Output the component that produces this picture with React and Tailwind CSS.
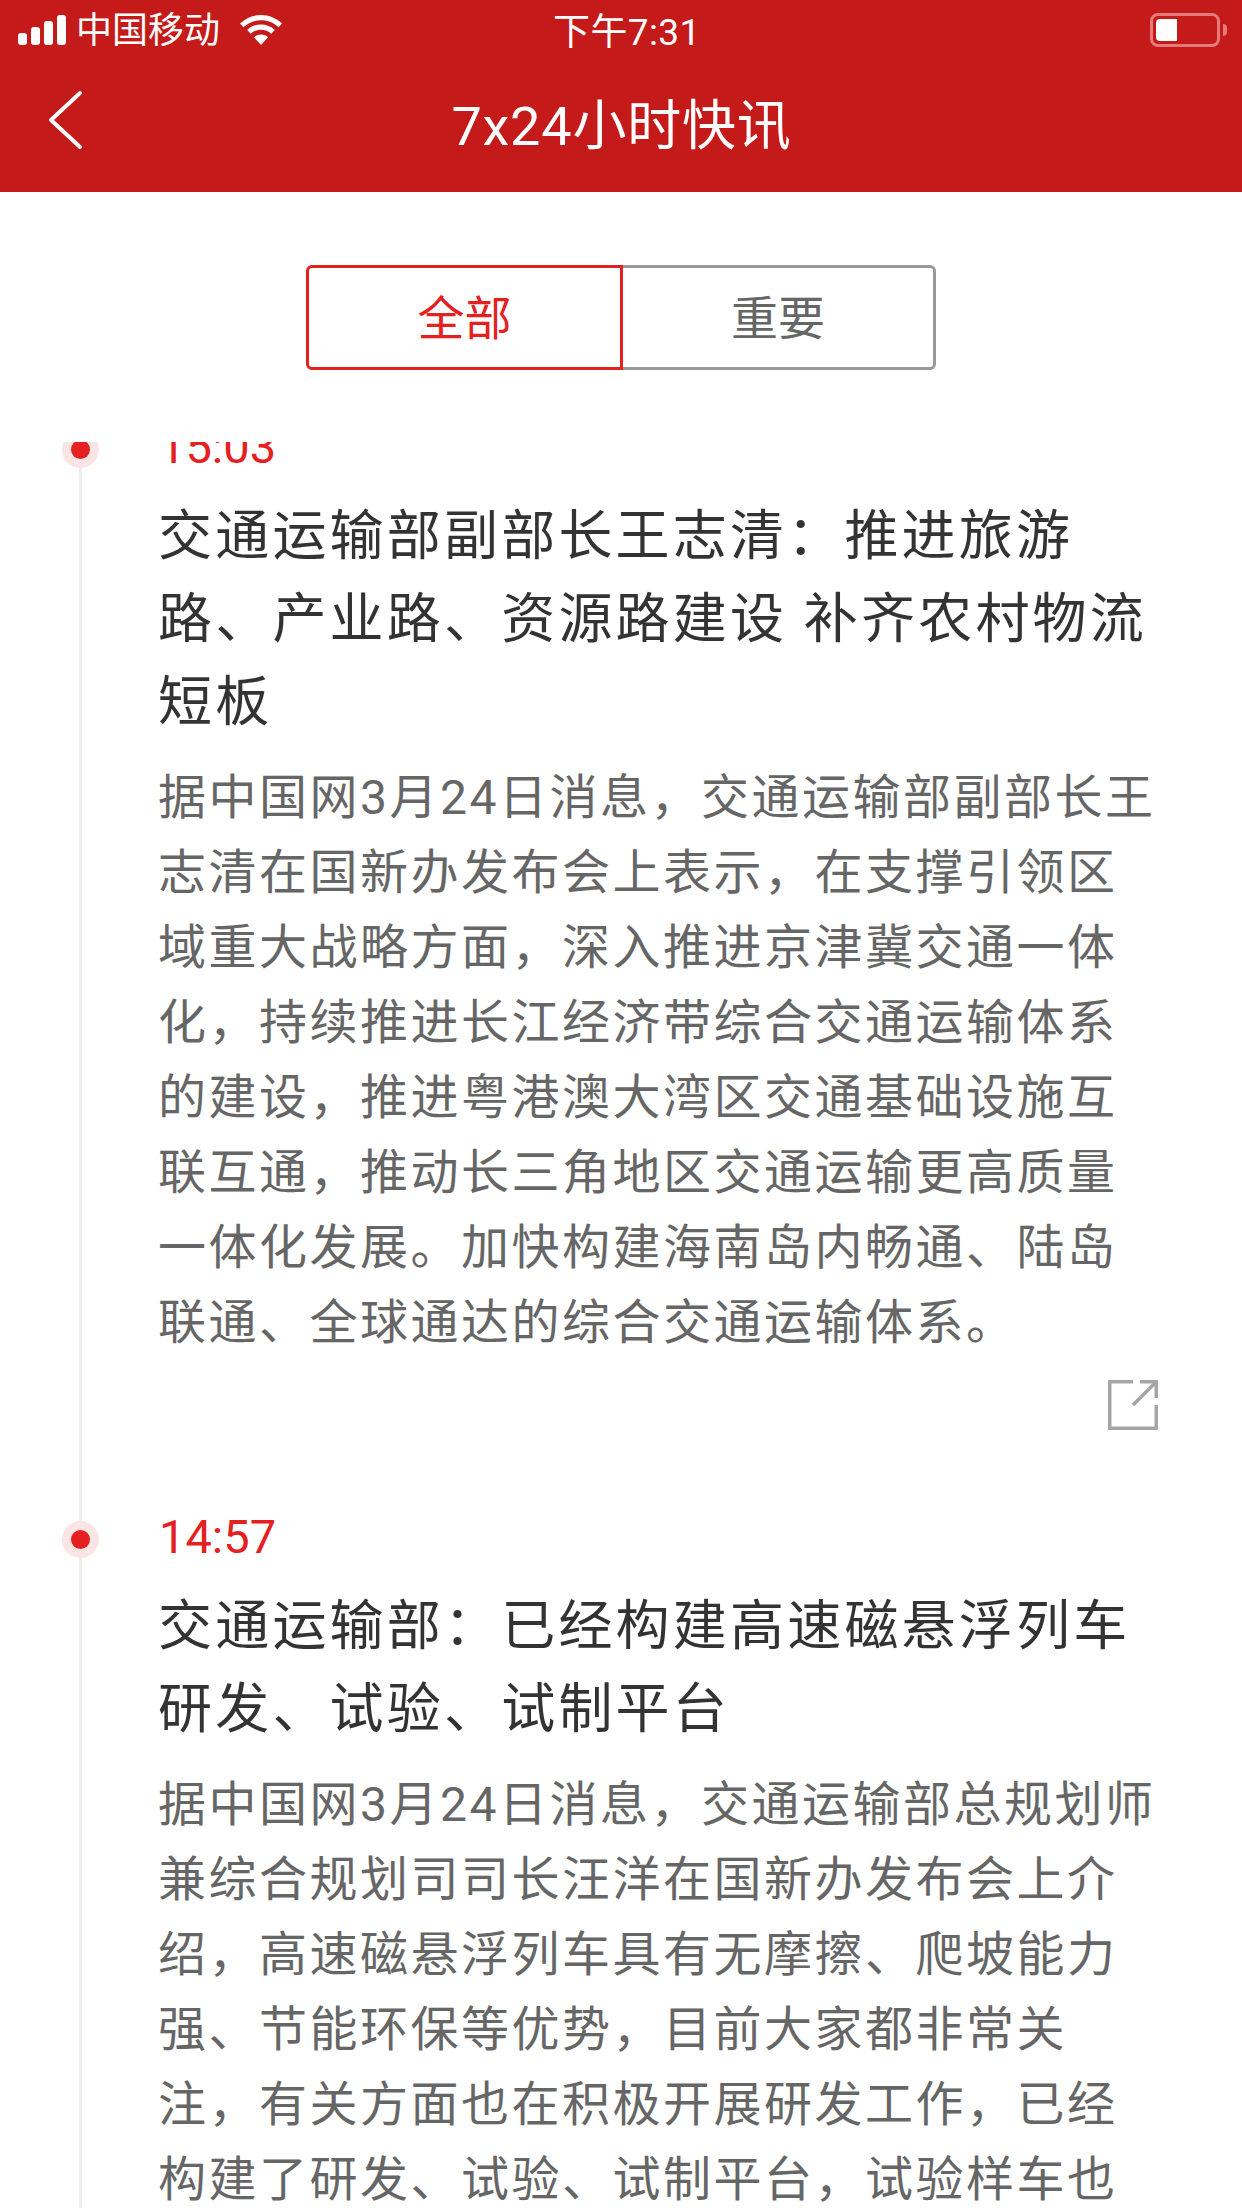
const items = [
  {
    time: "15:03",
    title: ["交通运输部副部长王志清：推进旅游", "路、产业路、资源路建设 补齐农村物流", "短板"],
    body: [
      "据中国网3月24日消息，交通运输部副部长王",
      "志清在国新办发布会上表示，在支撑引领区",
      "域重大战略方面，深入推进京津冀交通一体",
      "化，持续推进长江经济带综合交通运输体系",
      "的建设，推进粤港澳大湾区交通基础设施互",
      "联互通，推动长三角地区交通运输更高质量",
      "一体化发展。加快构建海南岛内畅通、陆岛",
      "联通、全球通达的综合交通运输体系。",
    ],
    share: true,
  },
  {
    time: "14:57",
    title: ["交通运输部：已经构建高速磁悬浮列车", "研发、试验、试制平台"],
    body: [
      "据中国网3月24日消息，交通运输部总规划师",
      "兼综合规划司司长汪洋在国新办发布会上介",
      "绍，高速磁悬浮列车具有无摩擦、爬坡能力",
      "强、节能环保等优势，目前大家都非常关",
      "注，有关方面也在积极开展研发工作，已经",
      "构建了研发、试验、试制平台，试验样车也",
    ],
  },
];

function StatusBar() {
  return (
    <div className="flex items-center h-[57px] relative text-white">
      <svg width="48" height="30" viewBox="0 0 48 30" className="ml-[18px] mt-[3px]" fill="#fff">
        <rect x="0" y="18" width="9" height="12" rx="3" />
        <rect x="13" y="12" width="9" height="18" rx="3" />
        <rect x="26" y="6" width="9" height="24" rx="3" />
        <rect x="39" y="0" width="9" height="30" rx="3" />
      </svg>
      <span className="ml-[10px] mt-[6px] text-[36px] leading-[57px]">中国移动</span>
      <svg width="42" height="30" viewBox="0 0 42 30" className="ml-[20px] mt-[3px]" fill="#fff">
        <path d="M21 0C13 0 6 3 0 8.500l3.400 3.700C8.200 7.800 14.300 5.200 21 5.200s12.800 2.600 17.600 7L42 8.500C36 3 29 0 21 0z" />
        <path d="M21 9.500c-5.300 0-10.100 2-13.800 5.400l3.500 3.800c2.800-2.500 6.400-4 10.300-4s7.500 1.500 10.300 4l3.500-3.800C31.100 11.500 26.300 9.500 21 9.500z" />
        <path d="M21 19.500c-2.700 0-5.200 1-7 2.700L21 30l7-7.800c-1.800-1.700-4.300-2.700-7-2.700z" />
      </svg>
      <span className="absolute left-[553px] top-0 text-[37px] tracking-[0.4px] leading-[66px] whitespace-nowrap">下午7:31</span>
      <div className="absolute left-[1150px] top-[13px] flex items-center">
        <div className="w-[70px] h-[34px] rounded-[8px] border-[3px] border-[#e57a7a] p-[3px]">
          <div className="w-[21px] h-[22px] bg-white rounded-l-[4px]" />
        </div>
        <div className="w-[4px] h-[12px] ml-[3px] rounded-r-[4px] bg-[#e57a7a]" />
      </div>
    </div>
  );
}

function Header() {
  return (
    <div className="relative h-[135px] flex items-center justify-center">
      <svg width="38" height="60" viewBox="0 0 38 60" className="absolute left-[47px] top-[33px]" fill="none" stroke="#fff" strokeWidth="4" strokeLinecap="round" strokeLinejoin="round">
        <path d="M33 3 L4 30 L33 57" />
      </svg>
      <span className="text-white text-[54px] leading-[72px] tracking-[0.8px] -mr-[1px] mt-[4px] whitespace-nowrap">7x24小时快讯</span>
    </div>
  );
}

function Tabs() {
  return (
    <div className="flex justify-center pt-[73px]">
      <div className="w-[317px] h-[105px] flex items-center justify-center pt-[3px] border-[3px] border-[#e42020] rounded-l-[6px] text-[#e42020] text-[47px]">全部</div>
      <div className="w-[313px] h-[105px] flex items-center justify-center pt-[3px] border-[3px] border-l-0 border-[#999999] rounded-r-[6px] text-[#666666] text-[47px]">重要</div>
    </div>
  );
}

function ShareIcon() {
  return (
    <svg width="50" height="50" viewBox="0 0 50 50" fill="none" stroke="#a5a5a5" strokeWidth="3.500">
      <path d="M25 1.750H1.750V48.250H48.250V25" />
      <path d="M32 1.750H48.250V18" />
      <path d="M48 2 L25 25" />
    </svg>
  );
}

function Item({ item }) {
  return (
    <div className="relative pl-[158px] pb-[76px]">
      <div className="absolute left-[79px] top-0 bottom-0 w-[3px] bg-[#eeeeee]" />
      <div className="absolute left-[62px] top-[15px] w-[37px] h-[37px] rounded-full bg-[#fbe4e4] flex items-center justify-center">
        <div className="w-[19px] h-[19px] rounded-full bg-[#e42020]" />
      </div>
      <div className="text-[47px] leading-[62px] text-[#e42020] pl-[1px] pb-[17px]">{item.time}</div>
      <div className="text-[54px] leading-[83px] tracking-[3.200px] text-[#333333] pb-[16px]">
        {item.title.map((l) => (
          <div key={l} className="whitespace-nowrap">{l}</div>
        ))}
      </div>
      <div className="text-[48px] leading-[75px] tracking-[2.500px] text-[#666666]">
        {item.body.map((l) => (
          <div key={l} className="whitespace-nowrap">{l}</div>
        ))}
      </div>
      {item.share && (
        <div className="flex justify-end pr-[84px] pt-[20px]">
          <ShareIcon />
        </div>
      )}
    </div>
  );
}

export default function App() {
  return (
    <div className="w-[1242px] h-[2208px] overflow-hidden bg-white flex flex-col font-['Roboto','Noto_Sans_CJK_SC',sans-serif]">
      <div className="bg-[#c41a19] shrink-0">
        <StatusBar />
        <Header />
      </div>
      <Tabs />
      <div className="mt-[72px] flex-1 overflow-hidden">
        <div className="-mt-[26px]">
          {items.map((it) => (
            <Item key={it.time} item={it} />
          ))}
        </div>
      </div>
    </div>
  );
}
